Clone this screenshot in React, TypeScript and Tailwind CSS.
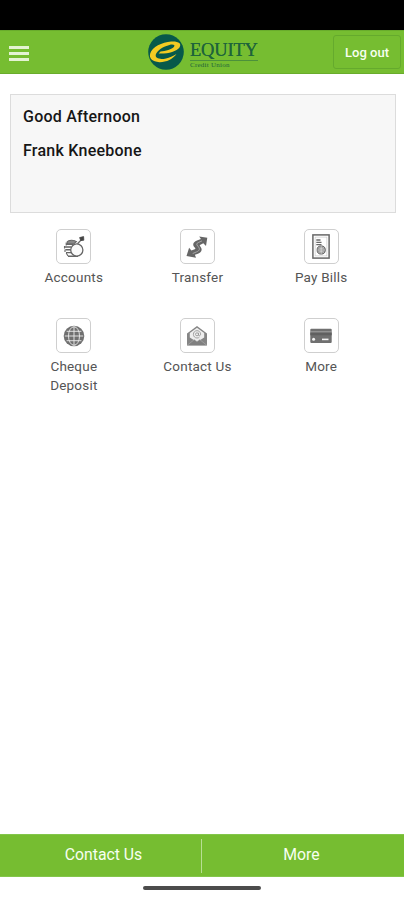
import type { ReactNode } from 'react'

function Logo() {
  return (
    <svg width="36" height="36" viewBox="0 0 36 36" className="shrink-0">
      <circle cx="18" cy="18" r="17.8" fill="#07594a" />
      <path
        d="M12.5 17.4C17.5 17.2 24 15.3 26 12.8C27.5 10.8 25 10.2 21.5 10.9C15.5 12.2 8.8 16.6 7.8 20.6C6.8 24.8 12.5 25.6 18 24.4C21.5 23.6 25 22.2 28.5 20C25 25 18 28.4 11.4 28.2C4.4 28 .8 24.4 2.2 19.6C4 13.4 14 8.1 23.2 7.6C30.6 7.2 34 9.6 31.5 13.4C28.7 17.6 18.5 20 10.6 19.4Z"
        fill="#f3cb22"
      />
    </svg>
  )
}

function AccountsIcon() {
  return (
    <svg width="22" height="24" viewBox="0 0 22 24" fill="none" stroke="#666" strokeWidth="1.1">
      <path d="M14.5 8.8L18.5 4.6" strokeWidth="1.3" />
      <path d="M16.6 2.6L20.6 1.6L20.8 5.2L17.8 5.6Z" fill="#444" stroke="#444" strokeWidth="0.8" />
      <path d="M4.2 6.8C5.5 4.8 11 4.6 13.5 6.6L10 9.4H4.5Z" fill="#888" />
      <path d="M3 9.3H10M2 12H8M2.4 14.8H8M3 17.6H9M5 21.2H15" strokeWidth="1.4" />
      <path d="M3.2 7.5V10.5M1.5 11V13.5M2 14.5V17M3.2 18L5 21" />
      <circle cx="13.8" cy="15" r="6.1" fill="#fafafa" stroke="#666" strokeWidth="1.3" />
    </svg>
  )
}

function TransferIcon() {
  return (
    <svg width="22" height="24" viewBox="0 0 22 24" fill="#666">
      <path d="M13.2 1.4L21.3 2.8L20 11L17.3 8.3L14 10.1C13.5 10.5 13.8 11 14.5 11.7C17.1 14.9 15 17.8 11.2 18.9L8.9 19.8L10 22.7L.5 20.9L3.1 12.8L5.4 15.5L8.7 14.3C9.7 13.8 9.4 13.2 8.7 12.5C5.9 9.5 7.3 6.9 11 5.5L14.9 4Z" />
      <path d="M16 5.9L12.2 7.6C10.5 8.4 10.2 9.4 11.8 11.1C14.3 13.7 13.8 15.6 10.6 16.9L6.7 18.5" fill="none" stroke="#b5b5b5" strokeWidth=".8" />
    </svg>
  )
}

function BillsIcon() {
  return (
    <svg width="18" height="25" viewBox="0 0 18 25" fill="none" stroke="#686868">
      <rect x=".9" y=".9" width="16.2" height="23.2" strokeWidth="1.5" />
      <rect x="3.1" y="3.1" width="11.8" height="18.8" stroke="#c4c4c4" strokeWidth=".6" />
      <path d="M4.3 6H8.5M4.3 8.3H9.5M4.3 10.6H9.5" strokeWidth="1.3" />
      <circle cx="9.2" cy="16" r="4.1" fill="#969696" strokeWidth="1" />
      <path d="M9.2 11.9V20.1M5.5 16H13M6.5 13.7C8 14.6 10.4 14.6 12 13.7M6.5 18.3C8 17.4 10.4 17.4 12 18.3" stroke="#e5e5e5" strokeWidth=".6" />
    </svg>
  )
}

function GlobeIcon() {
  return (
    <svg width="22" height="22" viewBox="0 0 22 22" fill="none">
      <circle cx="11" cy="11" r="10.3" fill="#707070" />
      <g stroke="#ececec" strokeWidth=".9">
        <path d="M11 1.8V20.2M1.8 11H20.2M3.6 6.3H18.4M3.6 15.7H18.4" />
        <ellipse cx="11" cy="11" rx="5.5" ry="9.3" />
      </g>
    </svg>
  )
}

function MailIcon() {
  return (
    <svg width="22" height="22" viewBox="0 0 22 22">
      <path d="M1 8.5L11 1L21 8.5V20.5H1Z" fill="#858585" />
      <path d="M3.8 8L11 2.8L18.2 8V12.5L11 17L3.8 12.5Z" fill="#eee" />
      <path d="M1.2 20.3L8.3 14.6L11 16.5L13.7 14.6L20.8 20.3" fill="#808080" stroke="#bbb" strokeWidth=".5" />
      <g fill="none" stroke="#999" strokeWidth=".9">
        <circle cx="11" cy="9.3" r="1.5" />
        <path d="M12.5 7.8V10.2C12.7 11.4 14.8 10.8 14.6 8.9C14.3 6.8 12.8 5.7 11 5.7C8.9 5.7 7.4 7.3 7.4 9.3C7.4 11.5 9 13 11 13C12 13 12.7 12.8 13.3 12.3" />
      </g>
    </svg>
  )
}

function CardIcon() {
  return (
    <svg width="22" height="16" viewBox="0 0 22 16">
      <rect x=".3" y=".8" width="21.4" height="14.2" rx="1" fill="#707070" />
      <path d="M.3 4H21.7" stroke="#bbb" strokeWidth=".9" />
      <rect x=".3" y="4.5" width="21.4" height="2.8" fill="#606060" />
      <circle cx="3.6" cy="11.3" r="1.5" fill="#f3f3f3" />
      <path d="M12 11.4H18.5" stroke="#f3f3f3" strokeWidth="1.6" />
    </svg>
  )
}

const items: { label: string; icon: ReactNode }[] = [
  { label: 'Accounts', icon: <AccountsIcon /> },
  { label: 'Transfer', icon: <TransferIcon /> },
  { label: 'Pay Bills', icon: <BillsIcon /> },
  { label: 'Cheque Deposit', icon: <GlobeIcon /> },
  { label: 'Contact Us', icon: <MailIcon /> },
  { label: 'More', icon: <CardIcon /> }
]

export default function App() {
  return (
    <div className="flex h-[900px] w-[404px] flex-col overflow-hidden bg-white font-['Roboto',sans-serif]">
      <div className="h-[30px] shrink-0 bg-black" />
      <header className="flex h-11 shrink-0 items-center border-y border-[#69ac2c] bg-[#76bd31] pl-[9px] pr-[3px]">
        <button className="mt-[3px] flex w-5 flex-col gap-[3px]" aria-label="Menu">
          <span className="h-[3px] w-full bg-[#e4f3d3]" />
          <span className="h-[3px] w-full bg-[#e4f3d3]" />
          <span className="h-[3px] w-full bg-[#e4f3d3]" />
        </button>
        <div className="ml-[119px] flex items-center gap-1.5">
          <Logo />
          <div className="flex w-[68px] flex-col pt-[7px] font-['Liberation_Serif',serif] text-[#1f643b]">
            <span className="text-[18.5px] leading-[18px] -tracking-[0.2px] [text-shadow:0_0_0.6px_#1f643b]">EQUITY</span>
            <span className="mt-px border-t border-[#4c913b] text-[7px] leading-[9px] tracking-[0.25px]">Credit Union</span>
          </div>
        </div>
        <button className="ml-auto h-[34px] w-[68px] rounded-[3px] border border-[#65aa2d] pt-px text-[13px] font-medium text-[#f7fff0]">
          Log out
        </button>
      </header>

      <main className="flex-1">
        <section className="ml-[10px] mr-2 mt-5 h-[119px] border border-[#dcdcdc] bg-[#f7f7f7] pl-3 pt-[10px] text-base font-medium text-[#161616]">
          <p className="leading-6 tracking-[0.24px]">Good Afternoon</p>
          <p className="mt-2.5 leading-6 tracking-[0.24px]">Frank Kneebone</p>
        </section>
        <div className="ml-3 mt-4 grid w-[371px] grid-cols-3">
          {items.map(item => (
            <a key={item.label} className="flex h-[89px] flex-col items-center">
              <span className="flex size-[35px] items-center justify-center rounded-[5px] border-[1.5px] border-[#cfcfcf] bg-white">
                {item.icon}
              </span>
              <span className="mt-[3.5px] w-[76px] text-center text-[13.5px] leading-[19.5px] tracking-[0.2px] text-[#555]">
                {item.label}
              </span>
            </a>
          ))}
        </div>
      </main>

      <footer className="flex h-[43px] shrink-0 items-center border-y border-[#83c64b] bg-[#76bd31] text-[15.8px] text-[#f7fff0]">
        <a className="w-[201px] pb-px pl-[6px] text-center">Contact Us</a>
        <span className="h-[34px] w-px bg-[#b8de94]" />
        <a className="flex-1 pb-px pr-[3px] text-center">More</a>
      </footer>
      <div className="flex h-[23px] shrink-0 justify-center pt-[9px]">
        <span className="h-[3.5px] w-[118px] rounded-sm bg-[#4c4c4c]" />
      </div>
    </div>
  )
}
